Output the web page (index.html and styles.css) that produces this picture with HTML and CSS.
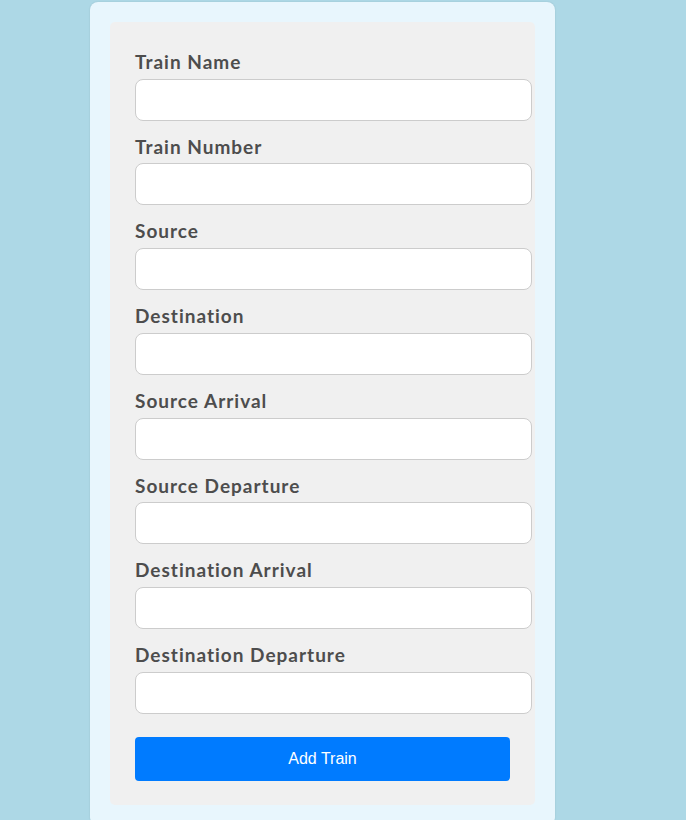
FILE: index.html
```html
<!DOCTYPE html>
<html>
<head>
<meta charset="utf-8">
<link rel="stylesheet" href="styles.css">
</head>
<body>
<div class="card">
  <form class="train-form">
    <label class="field-label">Train Name</label>
    <input class="field-input" type="text">
    <label class="field-label">Train Number</label>
    <input class="field-input" type="text">
    <label class="field-label">Source</label>
    <input class="field-input" type="text">
    <label class="field-label">Destination</label>
    <input class="field-input" type="text">
    <label class="field-label">Source Arrival</label>
    <input class="field-input" type="text">
    <label class="field-label">Source Departure</label>
    <input class="field-input" type="text">
    <label class="field-label">Destination Arrival</label>
    <input class="field-input" type="text">
    <label class="field-label">Destination Departure</label>
    <input class="field-input" type="text">
    <button class="submit-btn" type="button">Add Train</button>
  </form>
</div>
</body>
</html>
```
FILE: styles.css
```css
html, body {
  margin: 0;
  padding: 0;
}
body {
  background: #add8e6;
  height: 820px;
  overflow: hidden;
}
.card {
  width: 425px;
  margin: 2px 0 0 90px;
  padding: 20px;
  background: #e8f6fd;
  border-radius: 8px;
  box-shadow: 0 0 2px rgba(0, 0, 0, 0.12);
}
.train-form {
  display: block;
  background: #f0f0f0;
  border-radius: 5px;
  padding: 28px 25px 24px;
}
.field-label {
  display: block;
  font-family: "Comic Sans MS", "Lato", sans-serif;
  font-weight: bold;
  font-size: 19px;
  letter-spacing: 1px;
  line-height: 23.7px;
  color: #4d4d4d;
  margin-bottom: 5px;
}
.field-input {
  display: block;
  width: 100%;
  height: 20px;
  padding: 10px;
  margin: 0 0 14px 0;
  border: 1px solid #cccccc;
  border-radius: 8px;
  background: #ffffff;
  font-size: 16px;
  outline: none;
}
.submit-btn {
  display: block;
  width: 100%;
  height: 44px;
  margin-top: 23px;
  border: none;
  border-radius: 4px;
  background: #007bff;
  color: #ffffff;
  font-family: "Liberation Sans", Arial, sans-serif;
  font-size: 16px;
  cursor: pointer;
}
```
